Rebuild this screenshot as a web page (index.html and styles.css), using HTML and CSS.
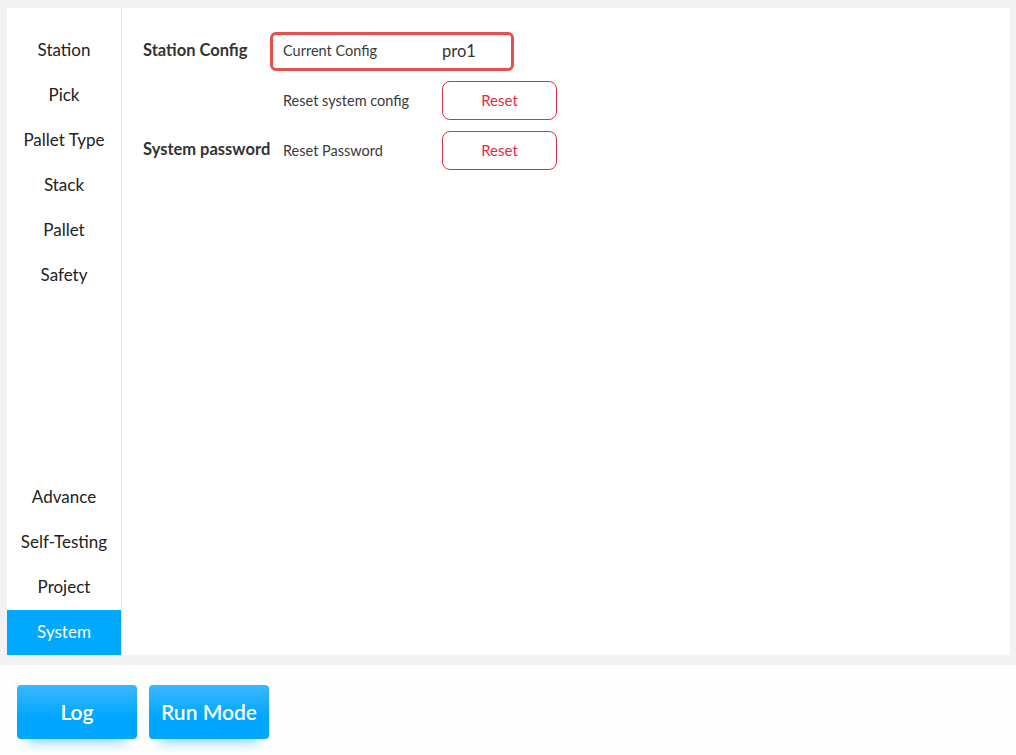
FILE: index.html
```html
<!DOCTYPE html>
<html>
<head>
<meta charset="utf-8">
<link rel="stylesheet" href="styles.css">
</head>
<body>
<div class="main">
  <nav class="sidebar">
    <div class="nav-group">
      <div class="nav-item">Station</div>
      <div class="nav-item">Pick</div>
      <div class="nav-item">Pallet Type</div>
      <div class="nav-item">Stack</div>
      <div class="nav-item">Pallet</div>
      <div class="nav-item">Safety</div>
    </div>
    <div class="nav-group">
      <div class="nav-item">Advance</div>
      <div class="nav-item">Self-Testing</div>
      <div class="nav-item">Project</div>
      <div class="nav-item active">System</div>
    </div>
  </nav>
  <section class="content">
    <div class="section">
      <div class="section-title">Station Config</div>
      <div class="rows">
        <div class="row highlight">
          <span class="row-label">Current Config</span>
          <span class="row-value">pro1</span>
        </div>
        <div class="row">
          <span class="row-label">Reset system config</span>
          <button class="reset-btn">Reset</button>
        </div>
      </div>
    </div>
    <div class="section">
      <div class="section-title">System password</div>
      <div class="rows">
        <div class="row">
          <span class="row-label">Reset Password</span>
          <button class="reset-btn">Reset</button>
        </div>
      </div>
    </div>
  </section>
</div>
<footer class="footer">
  <button class="action-btn">Log</button>
  <button class="action-btn">Run Mode</button>
</footer>
</body>
</html>
```
FILE: styles.css
```css
* { box-sizing: border-box; }
html, body { margin: 0; padding: 0; }
body {
  background: #f2f2f2;
  font-family: Lato, "Noto Sans", sans-serif;
  color: #333;
  width: 1016px;
  height: 755px;
  overflow: hidden;
}
.main {
  margin: 8px 6px 0 7px;
  height: 647px;
  background: #fff;
  display: flex;
}
.sidebar {
  width: 115px;
  border-right: 1px solid #e6e6e6;
  padding-top: 20px;
  display: flex;
  flex-direction: column;
  justify-content: space-between;
}
.nav-item {
  height: 45px;
  line-height: 44px;
  text-align: center;
  font-size: 17px;
  color: #222;
}
.nav-item.active {
  background: #00a8ff;
  color: #fff;
}
.content {
  flex: 1;
  padding: 24px 0 0 21px;
  display: flex;
  flex-direction: column;
  gap: 11px;
}
.section {
  display: flex;
}
.section-title {
  width: 127px;
  font-weight: bold;
  font-size: 16.5px;
  line-height: 37px;
  color: #333;
  white-space: nowrap;
}
.rows {
  display: flex;
  flex-direction: column;
  gap: 10px;
}
.row {
  height: 39px;
  display: flex;
  align-items: center;
  padding-left: 13px;
  font-size: 14.5px;
  color: #3a3a3a;
}
.row.highlight {
  width: 244px;
  border: 3px solid #e5504e;
  border-radius: 6px;
  padding-left: 10px;
  padding-bottom: 2px;
}
.row-label {
  width: 159px;
  flex: none;
}
.row-value {
  font-size: 16.5px;
  color: #333;
}
.reset-btn {
  width: 115px;
  height: 39px;
  border: 1px solid #d9314a;
  border-radius: 8px;
  background: #fff;
  color: #e0294a;
  font-family: inherit;
  font-size: 15px;
  padding: 0 0 2px;
}
.footer {
  margin-top: 10px;
  height: 90px;
  background: #fefefe;
  padding: 20px 17px;
  display: flex;
  gap: 12px;
  align-items: flex-start;
}
.action-btn {
  width: 120px;
  height: 54px;
  border: none;
  border-radius: 4px;
  background: linear-gradient(#3ab8ff, #00a6ff 60%);
  color: #fff;
  font-family: inherit;
  font-size: 21px;
  font-weight: 600;
  padding: 0 0 2px;
  box-shadow: 0 14px 12px -10px rgba(0, 160, 255, 0.4);
}
```
